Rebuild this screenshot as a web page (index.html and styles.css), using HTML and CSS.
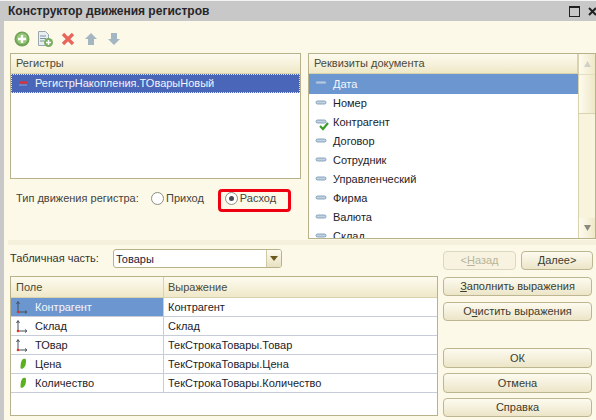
FILE: index.html
```html
<!DOCTYPE html>
<html lang="ru">
<head>
<meta charset="utf-8">
<title>Конструктор движения регистров</title>
<link rel="stylesheet" href="styles.css">
</head>
<body>
<div class="window">
  <header class="titlebar">
    <span class="title">Конструктор движения регистров</span>
    <span class="winbtns">
      <svg width="11" height="11" viewBox="0 0 11 11"><rect x="0.5" y="0.5" width="10" height="10" fill="none" stroke="#222"/><path d="M0 1.5H11" stroke="#222"/></svg>
      <svg width="9" height="11" viewBox="0 0 9 11"><path d="M1 2l7 7M8 2l-7 7" stroke="#222" stroke-width="2"/></svg>
    </span>
  </header>
  <div class="content">
    <div class="toolbar">
      <svg width="16" height="16" viewBox="0 0 16 16"><circle cx="8" cy="8" r="7.5" fill="#6fa456"/><circle cx="8" cy="7.5" r="5.5" fill="#96c779"/><path d="M8 4v8M4 8h8" stroke="#fff" stroke-width="2.4"/></svg>
      <svg width="16" height="16" viewBox="0 0 16 16"><path d="M1.5.5h7l3 3v11h-10z" fill="#e9eef0" stroke="#9aa7ad"/><path d="M3 5h6M3 7.500h6M3 10h4" stroke="#7d93a3"/><circle cx="11.500" cy="11.500" r="4.500" fill="#79ad61"/><path d="M11.500 9v5M9 11.500h5" stroke="#fff" stroke-width="1.500"/></svg>
      <svg width="16" height="16" viewBox="0 0 16 16"><path d="M3 3l10 10M13 3L3 13" stroke="#e8655c" stroke-width="3.200"/></svg>
      <svg width="16" height="16" viewBox="0 0 16 16"><path d="M8 2l6 6h-3v6H5V8H2z" fill="#a3b6c2"/></svg>
      <svg width="16" height="16" viewBox="0 0 16 16"><path d="M5 2h6v6h3l-6 6-6-6h3z" fill="#a3b6c2"/></svg>
    </div>
    <div class="top">
      <div class="left">
        <section class="panel registers">
          <div class="head">Регистры</div>
          <div class="reg-row">
            <svg width="14" height="8" viewBox="0 0 14 8"><path d="M1 2.500h8" stroke="#e03030" stroke-width="2.200"/><path d="M1 5h8" stroke="#8fa0d8" stroke-width="1"/></svg>
            <span>РегистрНакопления.ТОварыНовый</span>
          </div>
        </section>
        <div class="move-type">
          <span class="move-label">Тип движения регистра:</span>
          <label class="radio"><i class="dot"></i>Приход</label>
          <label class="radio checked"><i class="dot"></i>Расход</label>
          <span class="highlight"></span>
        </div>
      </div>
      <section class="panel attrs">
        <div class="attrs-main">
          <div class="head">Реквизиты документа</div>
          <ul class="attr-list">
            <li class="sel"><svg class="ai" width="14" height="6" viewBox="0 0 14 6"><rect x="1" y="1.500" width="10" height="2" rx="1" fill="#b4c7e2" stroke="#9db7d9" stroke-width=".6"/></svg>Дата</li>
            <li><svg class="ai" width="14" height="6" viewBox="0 0 14 6"><rect x="1" y="1" width="10" height="3" rx="1.500" fill="#c4d2e0" stroke="#6f93b3" stroke-width=".8"/></svg>Номер</li>
            <li><svg class="ai" width="14" height="12" viewBox="0 0 14 12"><rect x="1" y="1" width="10" height="3" rx="1.500" fill="#c4d2e0" stroke="#6f93b3" stroke-width=".8"/><path d="M5 7l3 3 5-6" fill="none" stroke="#3f9b2c" stroke-width="2.200"/></svg>Контрагент</li>
            <li><svg class="ai" width="14" height="6" viewBox="0 0 14 6"><rect x="1" y="1" width="10" height="3" rx="1.500" fill="#c4d2e0" stroke="#6f93b3" stroke-width=".8"/></svg>Договор</li>
            <li><svg class="ai" width="14" height="6" viewBox="0 0 14 6"><rect x="1" y="1" width="10" height="3" rx="1.500" fill="#c4d2e0" stroke="#6f93b3" stroke-width=".8"/></svg>Сотрудник</li>
            <li><svg class="ai" width="14" height="6" viewBox="0 0 14 6"><rect x="1" y="1" width="10" height="3" rx="1.500" fill="#c4d2e0" stroke="#6f93b3" stroke-width=".8"/></svg>Управленческий</li>
            <li><svg class="ai" width="14" height="6" viewBox="0 0 14 6"><rect x="1" y="1" width="10" height="3" rx="1.500" fill="#c4d2e0" stroke="#6f93b3" stroke-width=".8"/></svg>Фирма</li>
            <li><svg class="ai" width="14" height="6" viewBox="0 0 14 6"><rect x="1" y="1" width="10" height="3" rx="1.500" fill="#c4d2e0" stroke="#6f93b3" stroke-width=".8"/></svg>Валюта</li>
            <li><svg class="ai" width="14" height="6" viewBox="0 0 14 6"><rect x="1" y="1" width="10" height="3" rx="1.500" fill="#c4d2e0" stroke="#6f93b3" stroke-width=".8"/></svg>Склад</li>
          </ul>
        </div>
        <div class="scrollbar">
          <span class="sb-btn"><svg width="7" height="6" viewBox="0 0 7 6"><path d="M3.500 0L7 6H0z" fill="#d2d0c4"/></svg></span>
          <span class="sb-thumb"></span>
          <span class="sb-track"></span>
          <span class="sb-btn"><svg width="7" height="6" viewBox="0 0 7 6"><path d="M0 0h7L3.500 6z" fill="#8a8a80"/></svg></span>
        </div>
      </section>
    </div>
    <div class="splitter"></div>
    <div class="bottom">
      <div class="bottom-left">
        <div class="tabpart">
          <span class="tab-label">Табличная часть:</span>
          <div class="combo"><span class="combo-text">Товары</span><span class="combo-btn"><svg width="8" height="5" viewBox="0 0 8 5"><path d="M0 0h8L4 5z" fill="#6b5a1e"/></svg></span></div>
        </div>
        <section class="grid">
          <div class="grid-head"><div class="c1">Поле</div><div class="c2">Выражение</div></div>
          <div class="grid-row"><div class="c1 sel"><svg class="gi" width="14" height="14" viewBox="0 0 14 14"><path d="M3 2v10h8" fill="none" stroke="#44505c"/><path d="M1.500 4L3 1.500 4.500 4M10 10.500l2 1.500-2 1.500" fill="none" stroke="#44505c"/><circle cx="3" cy="12" r="1.300" fill="#d23a2a"/></svg>Контрагент</div><div class="c2">Контрагент</div></div>
          <div class="grid-row"><div class="c1"><svg class="gi" width="14" height="14" viewBox="0 0 14 14"><path d="M3 2v10h8" fill="none" stroke="#44505c"/><path d="M1.500 4L3 1.500 4.500 4M10 10.500l2 1.500-2 1.500" fill="none" stroke="#44505c"/><circle cx="3" cy="12" r="1.300" fill="#d23a2a"/></svg>Склад</div><div class="c2">Склад</div></div>
          <div class="grid-row"><div class="c1"><svg class="gi" width="14" height="14" viewBox="0 0 14 14"><path d="M3 2v10h8" fill="none" stroke="#44505c"/><path d="M1.500 4L3 1.500 4.500 4M10 10.500l2 1.500-2 1.500" fill="none" stroke="#44505c"/><circle cx="3" cy="12" r="1.300" fill="#d23a2a"/></svg>ТОвар</div><div class="c2">ТекСтрокаТовары.Товар</div></div>
          <div class="grid-row"><div class="c1"><svg class="gi" width="14" height="14" viewBox="0 0 14 14"><path d="M8 2c2.500-.5 3 0 3 1.500 0 3.500-.5 6.500-3 8-1.500.5-2.500.5-2.500-1C5.500 7 6 3.500 8 2z" fill="#5cb01e"/></svg>Цена</div><div class="c2">ТекСтрокаТовары.Цена</div></div>
          <div class="grid-row"><div class="c1"><svg class="gi" width="14" height="14" viewBox="0 0 14 14"><path d="M8 2c2.500-.5 3 0 3 1.500 0 3.500-.5 6.500-3 8-1.500.5-2.500.5-2.500-1C5.500 7 6 3.500 8 2z" fill="#5cb01e"/></svg>Количество</div><div class="c2">ТекСтрокаТовары.Количество</div></div>
        </section>
      </div>
      <div class="actions">
        <div class="nav">
          <button class="btn nav-back" disabled>&lt;<u>Н</u>азад</button>
          <button class="btn nav-next"><u>Д</u>алее&gt;</button>
        </div>
        <button class="btn fill"><u>З</u>аполнить выражения</button>
        <button class="btn clear">О<u>ч</u>истить выражения</button>
        <button class="btn ok">ОК</button>
        <button class="btn cancel">Отмена</button>
        <button class="btn help">Справка</button>
      </div>
    </div>
  </div>
</div>
</body>
</html>
```
FILE: styles.css
```css
* { box-sizing: border-box; }
html, body { margin: 0; padding: 0; height: 100%; }
body {
  width: 596px; height: 420px; overflow: hidden;
  background: #fdf9e9;
  font: 11px/1 "Liberation Sans", Arial, sans-serif;
  color: #1a1a1a;
}
.window { height: 420px; border-top: 1px solid #f4f4f4; display: flex; flex-direction: column; background: #c8c8c8; }
.titlebar {
  height: 20px; flex: none; background: #c8c8c8;
  display: flex; align-items: center; justify-content: space-between;
  padding: 0 0 0 8px;
}
.title { font-weight: bold; font-size: 12px; color: #26262a; }
.winbtns { display: flex; gap: 8px; align-items: center; margin-right: -1px; }
.content {
  flex: 1; min-height: 0; margin-left: 4px; background: #fdf9e9;
  padding: 10px 0 0 6px; display: flex; flex-direction: column;
}
.toolbar { height: 22px; flex: none; display: flex; align-items: flex-start; gap: 7px; padding-left: 4px; }
.top { display: flex; height: 186px; flex: none; }
.left { width: 291px; flex: none; display: flex; flex-direction: column; }
.panel { border: 1px solid #b8b28a; background: #fff; }
.head {
  height: 20px; padding: 0 0 0 5px; display: flex; align-items: center;
  background: linear-gradient(#fdfbef, #efe8c8);
  border-bottom: 1px solid #d8d2ae; color: #4a4a3c;
}
.registers { height: 126px; flex: none; }
.reg-row {
  height: 19px; display: flex; align-items: center; padding-left: 7px;
  background: #4a66b8; color: #f2f4fb; outline: 1px dotted #dfe4f5; outline-offset: -1px;
  gap: 3px;
}
.move-type {
  position: relative; flex: 1; display: flex; align-items: flex-start;
  padding: 14px 0 0 6px; color: #44443c;
}
.move-label { width: 135px; }
.radio { display: flex; align-items: center; gap: 2px; margin-top: -1px; }
.radio + .radio { margin-left: 21px; }
.dot {
  width: 13px; height: 13px; border-radius: 50%; border: 1px solid #8e8e80;
  background: #fff; display: flex; align-items: center; justify-content: center;
}
.checked .dot::after { content: ""; width: 5px; height: 5px; border-radius: 50%; background: #4a4a52; }
.highlight {
  position: absolute; left: 208px; top: 10px; width: 73px; height: 23px;
  border: 3px solid #ee0010; border-radius: 4px; pointer-events: none;
}
.attrs { margin-left: 7px; width: 288px; display: flex; flex: none; height: 186px; overflow: hidden; }
.attrs-main { flex: 1; min-width: 0; overflow: hidden; }
.attrs .head { border-right: 1px solid #d8d2ae; }
.attr-list { list-style: none; margin: 0; padding: 0; background: #fff; }
.attr-list li {
  height: 19px; padding-left: 24px; display: flex; align-items: center; position: relative;
  color: #1c1c2a;
}
.attr-list li.sel { height: 20px; background: #6b96cf; color: #f4f7fc; }
.ai { position: absolute; left: 6px; top: 6px; }
.scrollbar { width: 17px; flex: none; display: flex; flex-direction: column; background: #f7f3dd; border-left: 1px solid #d8d2ae; }
.sb-btn { height: 20px; flex: none; display: flex; align-items: center; justify-content: center; background: linear-gradient(90deg, #fdfbef, #efe8c8); }
.sb-thumb { height: 40px; flex: none; background: linear-gradient(90deg, #fdfbef, #eee7c6); border-top: 1px solid #e4dfc0; border-bottom: 1px solid #d8d2ae; }
.sb-track { flex: 1; }
.splitter { height: 5px; flex: none; margin-top: 1px; margin-left: -2px; background: #f5f0dc; }
.bottom { display: flex; flex: 1; min-height: 0; }
.bottom-left { width: 428px; flex: none; display: flex; flex-direction: column; }
.tabpart { height: 27px; margin-top: 4px; flex: none; display: flex; align-items: flex-start; color: #33332c; }
.tab-label { width: 103px; padding-top: 4px; }
.combo { width: 169px; height: 19px; border: 1px solid #b8b28a; border-radius: 3px; background: #fff; display: flex; overflow: hidden; }
.combo-text { flex: 1; padding: 4px 0 0 2px; color: #1c1c3a; }
.combo-btn { width: 15px; border-left: 1px solid #cfc9a6; background: linear-gradient(#fdfbef, #e8e1c0); display: flex; align-items: center; justify-content: center; }
.grid { border: 1px solid #b8b28a; background: #fff; height: 140px; flex: none; }
.grid-head { display: flex; height: 21px; background: linear-gradient(#fdfbef, #efe8c8); border-bottom: 1px solid #d8d2ae; color: #4a4a3c; }
.grid-row { display: flex; height: 19px; border-bottom: 1px solid #c6cdd8; color: #1c1c2a; }
.c1 { width: 153px; flex: none; display: flex; align-items: center; padding-left: 24px; border-right: 1px solid #c6cdd8; position: relative; }
.c2 { flex: 1; min-width: 0; display: flex; align-items: center; padding-left: 4px; }
.grid-head .c1 { padding-left: 5px; border-right-color: #d8d2ae; }
.c1.sel { background: #6b96cf; color: #f4f7fc; }
.gi { position: absolute; left: 4px; top: 2px; }
.actions { width: 150px; margin-left: 5px; flex: none; display: flex; flex-direction: column; padding-top: 6px; }
.btn {
  height: 19px; width: 149px; flex: none; padding: 0; border: 1px solid #bdb791; border-radius: 4px;
  background: linear-gradient(#fdfbf0, #ece5c8);
  font: 11px/1 "Liberation Sans", Arial, sans-serif; color: #3c3c30;
  display: flex; align-items: center; justify-content: center;
}
.nav { display: flex; justify-content: space-between; margin-bottom: 7px; }
.nav-back { width: 73px; color: #b8b49c; border-color: #dcd8bf; background: #f7f3e0; }
.nav-next { width: 72px; }
.clear { margin-top: 6px; }
.ok { margin-top: 27px; height: 20px; }
.cancel { margin-top: 5px; height: 20px; }
.help { margin-top: 5px; }
```
